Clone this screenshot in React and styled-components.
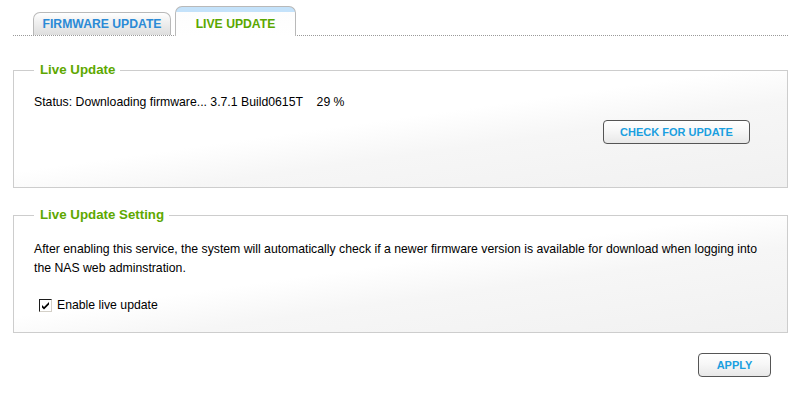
import styled, { createGlobalStyle } from "styled-components";

const GlobalStyle = createGlobalStyle`
  body {
    margin: 0;
    background: #fff;
    font-family: "Liberation Sans", Arial, sans-serif;
    font-size: 12.25px;
    color: #000;
  }
`;

const Page = styled.div`
  width: 802px;
  padding: 0 14px 0 13px;
  box-sizing: border-box;
`;

const TabBar = styled.div`
  height: 35px;
  display: flex;
  align-items: flex-end;
  gap: 4px;
  padding-left: 20px;
  border-bottom: 1px dotted #9a9a9a;
`;

const Tab = styled.div`
  box-sizing: border-box;
  width: ${(p) => p.$width}px;
  height: ${(p) => (p.$active ? 30 : 23)}px;
  margin-bottom: ${(p) => (p.$active ? -1 : 0)}px;
  padding-top: ${(p) => (p.$active ? 5 : 0)}px;
  display: flex;
  align-items: center;
  justify-content: center;
  border: 1px solid #b9b9b9;
  border-bottom: none;
  border-radius: 7px 7px 0 0;
  background: ${(p) =>
    p.$active
      ? "linear-gradient(#c4e2fa 0, #c4e2fa 5px, #fdfdfd 5px, #fff 100%)"
      : "linear-gradient(#ffffff, #f0f0f0 40%, #dedede)"};
  font-weight: bold;
  font-size: 12.2px;
  color: ${(p) => (p.$active ? "#5aa700" : "#2b8ad6")};
`;

const Fieldset = styled.fieldset`
  margin: ${(p) => p.$top}px 0 0;
  padding: 0 20px ${(p) => p.$bottom}px;
  border: 1px solid #cdcdcd;
  background: linear-gradient(172deg, #ffffff 45%, #f6f6f6 62%, #f1f1f1 100%);
`;

const Legend = styled.legend`
  padding: 0 5px 0 6px;
  font-size: 13.3px;
  line-height: 16px;
  font-weight: bold;
  color: #5ea800;
`;

const Text = styled.p`
  margin: ${(p) => p.$top}px 0 0;
  line-height: ${(p) => p.$lh || 16}px;
`;

const ButtonRow = styled.div`
  display: flex;
  justify-content: flex-end;
  margin-top: ${(p) => p.$top}px;
  padding-right: 17px;
`;

const Button = styled.button`
  box-sizing: border-box;
  width: ${(p) => p.$width}px;
  height: 24px;
  padding: 0;
  border: 1px solid #555;
  border-radius: 4px;
  background: linear-gradient(#ffffff, #f7f7f7 45%, #e8e8e8);
  font-family: "Liberation Sans", Arial, sans-serif;
  font-size: 11px;
  font-weight: bold;
  color: #1a9fe0;
  cursor: pointer;
`;

const CheckRow = styled.label`
  display: flex;
  align-items: center;
  gap: 5px;
  margin-top: 19px;
  padding-left: 5px;
  line-height: 16px;
`;

const CheckBox = styled.span`
  box-sizing: border-box;
  width: 13px;
  height: 13px;
  border: 1px solid #1c1c1c;
  border-right-color: #d4d0c8;
  border-bottom-color: #d4d0c8;
  background: #fff;
  display: flex;
  align-items: center;
  justify-content: center;
`;

const Check = () => (
  <svg width="9" height="9" viewBox="0 0 9 9">
    <path d="M1 4 L3 6 L8 1 L8 3.5 L3 8.5 L1 6.5 Z" fill="#000" />
  </svg>
);

export default function App() {
  return (
    <>
      <GlobalStyle />
      <Page>
        <TabBar>
          <Tab $width={138}>FIRMWARE UPDATE</Tab>
          <Tab $width={121} $active>
            LIVE UPDATE
          </Tab>
        </TabBar>

        <Fieldset $top={26} $bottom={43}>
          <Legend>Live Update</Legend>
          <Text $top={16}>
            Status: Downloading firmware... 3.7.1 Build0615T&nbsp;&nbsp;&nbsp;&nbsp;29 %
          </Text>
          <ButtonRow $top={10}>
            <Button $width={147}>CHECK FOR UPDATE</Button>
          </ButtonRow>
        </Fieldset>

        <Fieldset $top={19} $bottom={19}>
          <Legend>Live Update Setting</Legend>
          <Text $top={17} $lh={19}>
            After enabling this service, the system will automatically check if a newer
            firmware version is available for download when logging into the NAS web
            adminstration.
          </Text>
          <CheckRow>
            <CheckBox>
              <Check />
            </CheckBox>
            Enable live update
          </CheckRow>
        </Fieldset>

        <ButtonRow $top={20}>
          <Button $width={73}>APPLY</Button>
        </ButtonRow>
      </Page>
    </>
  );
}
